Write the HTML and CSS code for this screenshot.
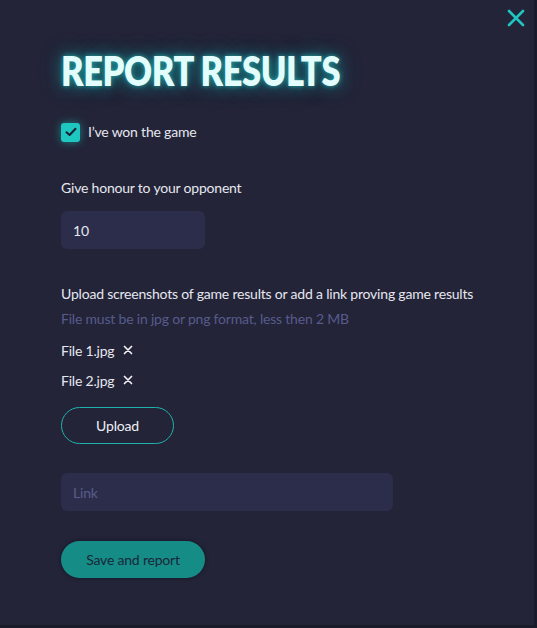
FILE: index.html
```html
<!DOCTYPE html>
<html lang="en">
<head>
<meta charset="utf-8">
<title>Report results</title>
<link rel="stylesheet" href="styles.css">
</head>
<body>
<div class="modal">
  <button class="close" aria-label="Close">
    <svg width="18" height="18" viewBox="0 0 18 18"><path d="M2 2L16 16M16 2L2 16" stroke="#1fc6bf" stroke-width="2.6" stroke-linecap="round" fill="none"/></svg>
  </button>
  <h1 class="title"><span>REPORT RESULTS</span></h1>
  <label class="check-row">
    <span class="checkbox">
      <svg width="12" height="10" viewBox="0 0 12 10"><path d="M1.5 5.2L4.6 8L10.5 1.8" stroke="#1b2134" stroke-width="2" stroke-linecap="round" stroke-linejoin="round" fill="none"/></svg>
    </span>
    <span class="text">I’ve won the game</span>
  </label>
  <p class="label honour">Give honour to your opponent</p>
  <div class="field small"><span class="value">10</span></div>
  <p class="label upload-label">Upload screenshots of game results or add a link proving game results</p>
  <p class="hint">File must be in jpg or png format, less then 2 MB</p>
  <div class="files">
    <div class="file"><span>File 1.jpg</span><svg class="x" width="10" height="10" viewBox="0 0 10 10"><path d="M1.5 1.5L8.5 8.5M8.5 1.5L1.5 8.5" stroke="#f0f0f5" stroke-width="1.7" stroke-linecap="round"/></svg></div>
    <div class="file"><span>File 2.jpg</span><svg class="x" width="10" height="10" viewBox="0 0 10 10"><path d="M1.5 1.5L8.5 8.5M8.5 1.5L1.5 8.5" stroke="#f0f0f5" stroke-width="1.7" stroke-linecap="round"/></svg></div>
  </div>
  <button class="btn-outline">Upload</button>
  <div class="field wide"><span class="placeholder">Link</span></div>
  <button class="btn-primary">Save and report</button>
</div>
</body>
</html>
```
FILE: styles.css
```css
html, body {
  margin: 0;
  padding: 0;
  background: #1b1c2b;
  height: 628px;
  overflow: hidden;
}
.modal {
  position: relative;
  box-sizing: border-box;
  width: 534px;
  height: 625px;
  background: #232438;
  padding: 0 0 0 61px;
  display: flex;
  flex-direction: column;
  align-items: flex-start;
  font-family: Lato, "Noto Sans", sans-serif;
  color: #e6e7ef;
  font-size: 14px;
  letter-spacing: -0.2px;
}
.close {
  position: absolute;
  top: 9px;
  right: 9px;
  width: 18px;
  height: 18px;
  padding: 0;
  border: 0;
  background: none;
  display: block;
}
.close svg { display: block; }
.title {
  margin: 49px 0 0;
  height: 42px;
  font-size: 42px;
  line-height: 42px;
  font-weight: 800;
  letter-spacing: -0.5px;
  color: #e3fcfc;
  text-shadow: 0 0 6px rgba(40, 210, 205, 0.7), 0 0 16px rgba(20, 175, 175, 0.6), 0 0 26px rgba(20, 150, 160, 0.35);
  white-space: nowrap;
}
.title span {
  display: inline-block;
  transform: scaleX(0.82);
  transform-origin: left center;
}
.check-row {
  margin-top: 31px;
  display: flex;
  align-items: center;
  gap: 8px;
  height: 20px;
}
.checkbox {
  width: 19px;
  height: 19px;
  border-radius: 3px;
  background: #1ec7c0;
  box-shadow: 0 0 8px rgba(30, 200, 193, 0.55);
  display: flex;
  align-items: center;
  justify-content: center;
}
.checkbox svg { display: block; }
.check-row .text { line-height: 20px; }
.label, .hint {
  margin: 0;
  line-height: 20px;
  white-space: nowrap;
}
.honour { margin-top: 36px; }
.field {
  box-sizing: border-box;
  height: 38px;
  border-radius: 6px;
  background: #2c2d4a;
  display: flex;
  align-items: center;
  padding-left: 12px;
}
.field.small { width: 144px; margin-top: 13px; }
.field.wide { width: 332px; margin-top: 29px; }
.value { color: #e6e7ef; }
.placeholder { color: #5a5c8a; }
.upload-label { margin-top: 35px; }
.hint { margin-top: 5px; color: #585b8c; }
.files {
  margin-top: 11px;
  display: flex;
  flex-direction: column;
  gap: 10px;
}
.file {
  display: flex;
  align-items: center;
  height: 20px;
}
.file span { width: 62px; }
.file .x { display: block; }
button {
  font-family: inherit;
  letter-spacing: inherit;
}
.btn-outline {
  margin-top: 17px;
  box-sizing: border-box;
  width: 113px;
  height: 37px;
  border-radius: 19px;
  border: 1.5px solid #1fb3ab;
  background: transparent;
  color: #eef0f5;
  font-size: 14px;
  padding: 0;
}
.btn-primary {
  margin-top: 30px;
  box-sizing: border-box;
  width: 144px;
  height: 37px;
  border-radius: 19px;
  border: 0;
  background: #168c86;
  color: #17283a;
  font-size: 14px;
  padding: 0;
  box-shadow: 0 0 4px rgba(10, 12, 22, 0.6);
}
```
